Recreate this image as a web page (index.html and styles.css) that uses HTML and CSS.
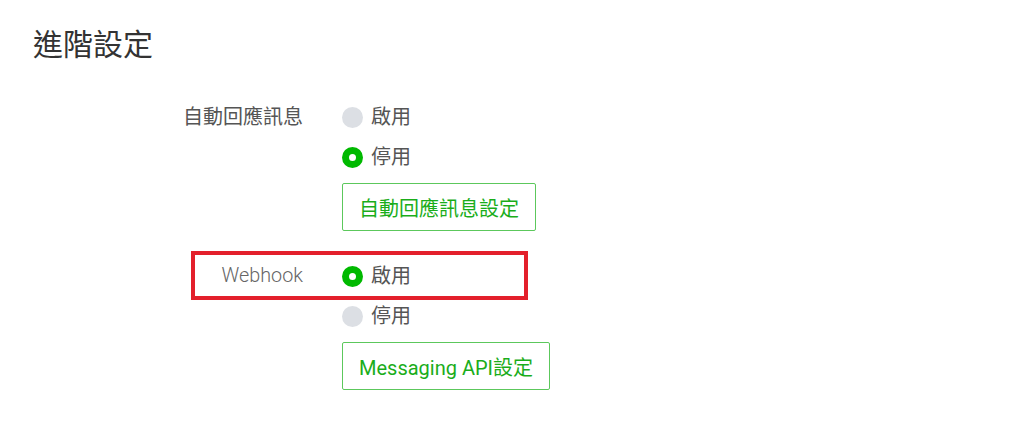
FILE: index.html
```html
<!DOCTYPE html>
<html lang="zh-Hant">
<head>
    <meta charset="UTF-8">
    <meta name="viewport" content="width=device-width, initial-scale=1.0">
    <title>進階設定</title>
    <link rel="stylesheet" href="styles.css">
</head>
<body>
    <main class="page">
        <h1 class="page-title">進階設定</h1>

        <div class="settings">
            <!-- Auto reply -->
            <div class="setting">
                <div class="setting-label">自動回應訊息</div>
                <div class="setting-control">
                    <label class="radio"><span class="radio-mark"></span>啟用</label>
                    <label class="radio checked"><span class="radio-mark"></span>停用</label>
                    <button class="btn-outline">自動回應訊息設定</button>
                </div>
            </div>

            <!-- Webhook -->
            <div class="setting">
                <div class="setting-label latin">Webhook</div>
                <div class="setting-control">
                    <label class="radio checked marked"><span class="radio-mark"></span>啟用</label>
                    <label class="radio"><span class="radio-mark"></span>停用</label>
                    <button class="btn-outline">Messaging API設定</button>
                </div>
            </div>
        </div>
    </main>
</body>
</html>
```

FILE: styles.css
```css
body {
    margin: 0;
    background: #fff;
    color: #555;
    font-family: Roboto, "Noto Sans CJK TC", sans-serif;
}

.page {
    padding: 22px 0 0 33px;
}

.page-title {
    margin: 0;
    font-size: 30px;
    font-weight: 400;
    line-height: 45px;
    color: #333;
}

.settings {
    display: flex;
    flex-direction: column;
    gap: 25px;
    margin: 30px 0 0 130px;
}

.setting {
    display: flex;
    gap: 39px;
    position: relative;
}

.setting-label {
    width: 140px;
    text-align: right;
    font-size: 20px;
    line-height: 40px;
}

.setting-label.latin {
    font-size: 19.8px;
    font-weight: 300;
    color: #666;
}

.setting-control {
    display: flex;
    flex-direction: column;
    align-items: flex-start;
}

.radio {
    display: flex;
    align-items: center;
    gap: 8px;
    height: 40px;
    font-size: 20px;
    line-height: 40px;
    cursor: pointer;
}

.radio-mark {
    box-sizing: border-box;
    width: 21px;
    height: 21px;
    border-radius: 50%;
    background: #dcdfe4;
}

.radio.checked .radio-mark {
    background: #fff;
    border: 7px solid #00b900;
}

/* red annotation box around the Webhook row */
.radio.marked::after {
    content: "";
    position: absolute;
    left: 28px;
    top: -5px;
    width: 337px;
    height: 49px;
    box-sizing: border-box;
    border: 4px solid #e3202b;
    pointer-events: none;
}

.btn-outline {
    margin-top: 6px;
    height: 48px;
    padding: 0 16px;
    background: #fff;
    border: 1px solid #5cc85c;
    border-radius: 2px;
    color: #1aad1a;
    font-family: Roboto, "Noto Sans CJK TC", sans-serif;
    font-size: 20px;
    cursor: pointer;
}
```
